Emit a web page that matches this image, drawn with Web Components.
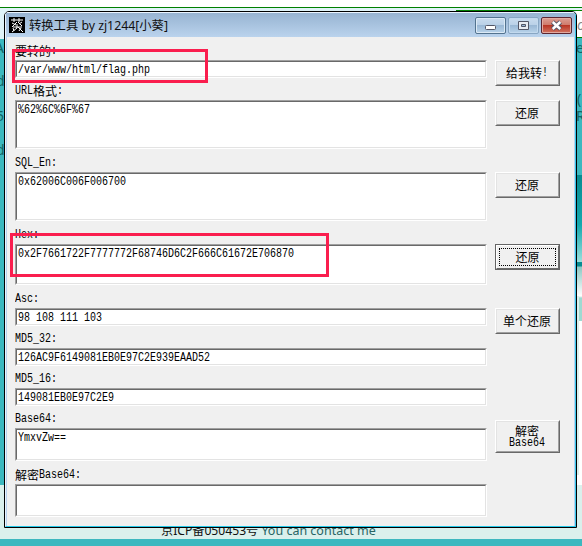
<!DOCTYPE html>
<html lang="zh"><head><meta charset="utf-8"><title>转换工具</title>
<style>html,body{margin:0;width:582px;height:546px;overflow:hidden}</style></head><body>
<desktop-scene></desktop-scene>
<script>
const define=(name,html,init)=>customElements.define(name,class extends HTMLElement{
 constructor(){super();this.attachShadow({mode:'open'}).innerHTML=html}
 connectedCallback(){if(init)init(this,this.shadowRoot)}
});
// Half-width characters occupy 6px cells; Chinese characters occupy 12px cells.
define('cell-text',`<style>:host{display:block;height:var(--lh,14px);line-height:var(--lh,14px);white-space:pre;font-family:"Noto Sans CJK SC",sans-serif;font-size:12px;color:#000}
.r{display:flex;height:var(--lh,14px)}.l{display:block;font:12px/var(--lh,14px) "Liberation Mono","Noto Sans CJK SC",monospace;transform:scaleX(.8333);transform-origin:0 0;white-space:pre}</style><div class="r"></div>`,(h,r)=>{
 const row=r.querySelector('.r');row.textContent='';
 for(const part of h.getAttribute('value').match(/[\x00-\x7f]+|[^\x00-\x7f]+/g)||[]){
  const s=document.createElement('span');s.textContent=part;
  if(/^[\x00-\x7f]/.test(part)){s.className='l';s.style.width=part.length*6+'px'}
  row.append(s)}
});
define('text-field',`<style>:host{display:block;box-sizing:border-box;background:#fff;border:1px solid;border-color:#a0a0a0 #fff #fff #a0a0a0}
div{box-sizing:border-box;height:100%;border:1px solid;border-color:#696969 #e3e3e3 #e3e3e3 #696969;padding:1px 1px}</style><div><slot></slot></div>`);
define('push-button',`<style>:host{display:block;box-sizing:border-box;width:65px;height:26px;background:#f0f0f0;border:1px solid;border-color:#fff #696969 #696969 #fff}
div{box-sizing:border-box;height:100%;border:1px solid;border-color:#e3e3e3 #a0a0a0 #a0a0a0 #e3e3e3;display:flex;flex-direction:column;align-items:center;justify-content:center;padding-right:1px}
:host([focused]){border-color:#646464}:host([focused]) div{border-color:#fff #696969 #696969 #fff;padding:2px}
.f{display:contents}:host([focused]) .f{display:flex;align-items:center;justify-content:center;width:100%;height:100%;box-sizing:border-box;border:1px dotted #000}</style><div><span class="f"><slot></slot></span></div>`);
define('form-row',`<style>:host{display:grid;grid-template-columns:472px 65px;grid-template-rows:16px auto;column-gap:8px;align-items:start}
::slotted(cell-text){grid-column:1/3}::slotted(text-field){grid-column:1;grid-row:2}::slotted(push-button){grid-column:2;grid-row:2}</style><slot></slot>`);
define('window-button',`<style>:host{display:block;box-sizing:border-box;width:31px;height:17px;border:1px solid #53738f;border-radius:2px;background:linear-gradient(#c9dcee,#b9d0e7 48%,#9ab8d5 50%,#b8d3ea);box-shadow:inset 0 0 0 1px #dceaf6}
:host([kind=max]){border-color:#88a6c3;box-shadow:inset 0 0 0 1px #c2d9ee}
:host([kind=close]){border-color:#5d2630;background:linear-gradient(#dc9e94,#cf7a6a 47%,#b93625 50%,#d27562);box-shadow:inset 0 0 0 1px #e2aaa0}
svg{display:block;width:29px;height:15px}</style><svg viewBox="0 0 29 15"></svg>`,(h,r)=>{
 r.querySelector('svg').innerHTML={min:'<rect x="9.5" y="7.5" width="10" height="4" rx="1" fill="#fff" stroke="#535666"/>',max:'<path fill="#e9edf3" fill-rule="evenodd" stroke="#535666" d="M9.5 3.5h10v8h-10zM12.5 6.5h4v2h-4z"/>',close:'<path d="M10.5 4l8 7M18.5 4l-8 7" stroke="#535666" stroke-width="4.5"/><path d="M10.7 4l7.6 7M18.3 4l-7.6 7" stroke="#fff" stroke-width="2.5"/>'}[h.getAttribute('kind')];
});
define('title-bar',`<style>:host{display:flex;box-sizing:border-box;height:24px;padding:3px 3px 0 3px;color:#111;background:linear-gradient(#98b4d2,#a8c3df 50%,#bad3ed)}
svg{width:16px;height:16px;margin-top:1px}.t{margin-left:4px;flex:1;white-space:pre;font:12.3px/19px "Noto Sans","Noto Sans CJK SC",sans-serif}.b{display:flex;gap:2px;margin-top:1px}</style>
<svg viewBox="0 0 16 16"><path d="M0 0h16v16H0z"/><path d="M2 3h12M5 1v4M10 1v4M3 6l4 2M8 5l-5 5M9 5l4 4M13 5l-3 2M4 10h9M8 7v4L3 15M9 10l5 5M4 11l1 3M12 11l-2 3" stroke="#fff" fill="none"/></svg><span class="t"><slot></slot></span><div class="b"><window-button kind="min"></window-button><window-button kind="max"></window-button><window-button kind="close"></window-button></div>`);
const rows=[
 [40,18,'要转的:','/var/www/html/flag.php','给我转!'],
 [72,49,'URL格式:','%62%6C%6F%67','还原'],
 [72,49,'SQL_En:','0x62006C006F006700','还原'],
 [64,41,'Hex:','0x2F7661722F7777772F68746D6C2F666C61672E706870','还原','focused'],
 [40,18,'Asc:','98 108 111 103','单个还原'],
 [40,18,'MD5_32:','126AC9F6149081EB0E97C2E939EAAD52'],
 [40,18,'MD5_16:','149081EB0E97C2E9'],
 [56,33,'Base64:','YmxvZw==','解密|Base64'],
 [50,33,'解密Base64:','']];
const body=rows.map(([h,f,l,v,b,x])=>{
 const tall=b&&b.includes('|');
 const button=b?`<push-button ${x||''} ${tall?'style="height:33px;margin-top:-8px;--lh:13px"':''}>${b.split('|').map(t=>`<cell-text value="${t}"></cell-text>`).join('')}</push-button>`:'';
 return `<form-row style="height:${h}px"><cell-text value="${l}"></cell-text><text-field style="height:${f}px"><cell-text value="${v}"></cell-text></text-field>${button}</form-row>`}).join('');
define('tool-window',`<style>:host{display:block;box-sizing:border-box;width:573px;height:517px;border:1px solid #000;border-radius:5px 5px 0 0;background:#f0f0f0;overflow:hidden}
.i{box-sizing:border-box;height:100%;border:1px solid;border-color:#eaf4ff #35c5e8 #22c8e8 #eaf4ff}.c{box-sizing:border-box;padding:7px 0 0 8px;border:solid #b9d3ee;border-width:0 1px;height:489px}</style><div class="i"><title-bar>转换工具 by zj1244[小葵]</title-bar><div class="c">${body}</div></div>`);
define('red-frame',`<style>:host{display:block;position:absolute;box-sizing:border-box;border:3px solid #fa1e4e}</style>`);
define('desktop-scene',`<style>:host{display:block;position:relative;width:582px;height:546px;overflow:hidden;background:linear-gradient(#fff 7px,#008000 7px 8px,#e0f3f8 8px 39px,#3cb8bf 39px 485px,#daf0ec 485px 539px,#3cb8bf 539px)}
.s,.w,.t,.g,.e,.foot{position:absolute}.s{left:576px;top:0;width:6px;height:485px;background:linear-gradient(#fff 7px,#008000 7px 8px,#e0f3f8 8px 10px,#008000 10px 11px,#fff 11px 37px,#008000 37px 38px,#3cb8bf 38px 175px,#078c91 175px,#14a9ae 225px,#9be0dd 262px,#078c91 262px 266px,#8cc9c4 267px,#fff 296px,#9edad2 298px 321px,#fff 321px)}
.e{left:577px;top:296px;width:2px;height:179px;background:#daf0ec}.g{left:456px;top:10px;width:121px;height:1px;background:#008000}.w{left:4px;top:11px}.t{font:14px/16px "Noto Sans",sans-serif;color:#126365}
.foot{left:161px;top:522px;font:12.15px/17px "Noto Sans","Noto Sans CJK SC",sans-serif;white-space:pre;color:#111}.foot span{color:#286564;font-size:12.5px}</style>
<div class="s"></div><div class="e"></div><div class="g"></div>
<span class="t" style="left:-5px;top:40px">A</span><span class="t" style="left:-4px;top:73px">d</span><span class="t" style="left:-4px;top:108px">5</span><span class="t" style="left:-4px;top:142px">d</span>
<span class="t" style="left:577px;top:17px;font-style:italic;color:#888">o</span><span class="t" style="left:576px;top:40px">e</span><span class="t" style="left:577px;top:91px">(</span><span class="t" style="left:576px;top:108px">R</span>
<div class="foot">京ICP备050453号 <span>You can contact me</span></div><tool-window class="w"></tool-window>
<red-frame style="left:12px;top:49px;width:196px;height:34px"></red-frame><red-frame style="left:10px;top:233px;width:319px;height:44px"></red-frame>`);
</script></body></html>
